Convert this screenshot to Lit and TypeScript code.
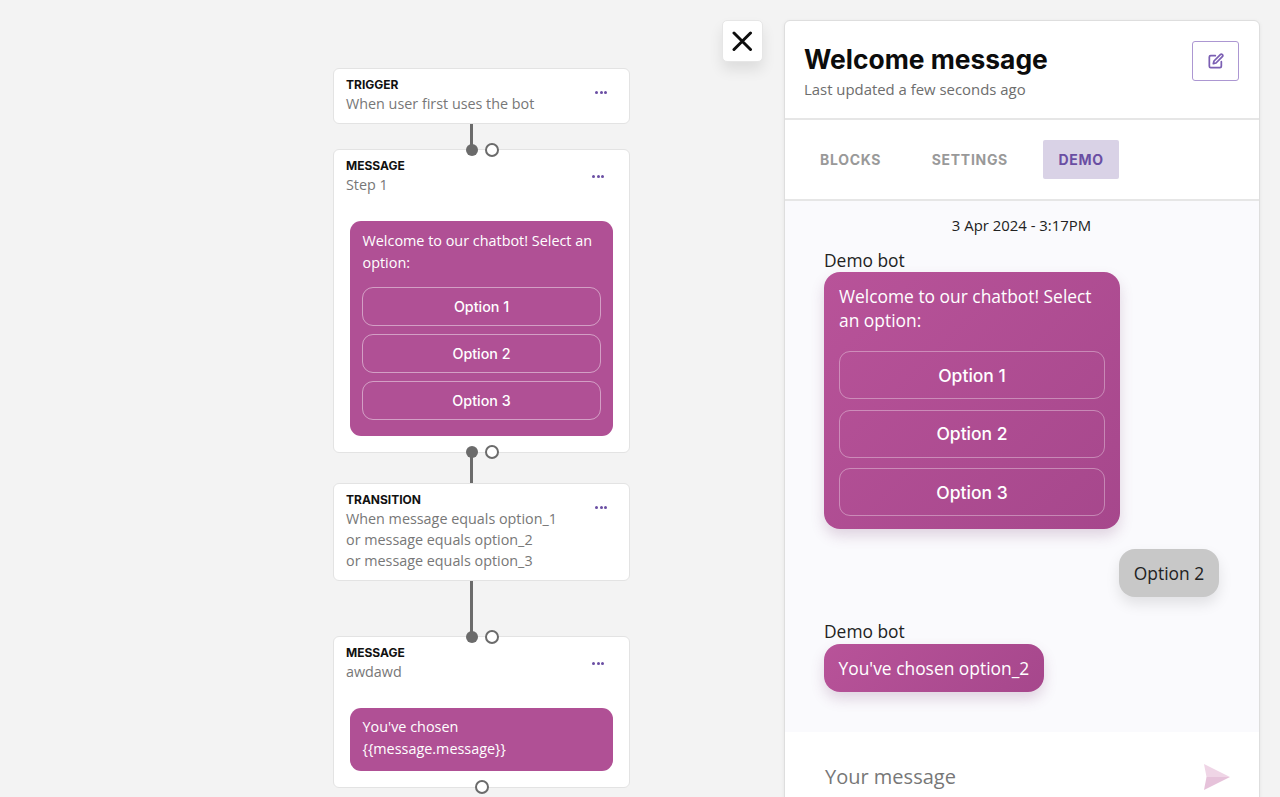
import { LitElement, html, css } from "lit";
import { customElement } from "lit/decorators.js";

@customElement("app-root")
export class AppRoot extends LitElement {
  static styles = css`
    :host { display: block; }
    * { box-sizing: border-box; }
    .page {
      display: flex; align-items: flex-start; height: 797px; overflow: hidden;
      background: #f3f3f3; padding-left: 333px;
      font-family: "Open Sans", "Noto Sans", sans-serif; color: #222;
    }
    .flow { width: 297px; flex: none; padding-top: 68px; display: flex; flex-direction: column; }
    .card {
      position: relative; background: #fff; border: 1px solid #e3e3e3; border-radius: 6px;
      padding: 8px 12px 0;
    }
    .trigger { height: 56px; }
    .step1 { height: 304px; }
    .transition { height: 98px; }
    .step2 { height: 152px; }
    .head { display: flex; justify-content: space-between; align-items: flex-start; }
    .label { font: 700 12px/16px Inter, sans-serif; color: #111; }
    .desc { font-size: 14.35px; line-height: 21px; color: #777; }
    .dots { display: flex; gap: 1.5px; padding-right: 10px; margin-top: 14px; }
    .step1 .dots, .step2 .dots { padding-right: 13px; margin-top: 17px; }
    .dots i { width: 3px; height: 3px; border-radius: 50%; background: #6a4ea3; }
    .node-bubble {
      margin: 26px 4px 0; background: #b05095; border-radius: 11px; color: #fff;
      padding: 9px 12px 16px; font-size: 14.4px; line-height: 22px;
    }
    .node-text { padding-left: 0.5px; }
    .step2 .node-bubble { height: 63px; padding-top: 8px; }
    .node-bubble .opts { margin-top: 13px; display: flex; flex-direction: column; gap: 8px; }
    .node-bubble .opt {
      height: 39px; border: 1px solid rgba(255,255,255,.45); border-radius: 11px;
      display: flex; align-items: center; justify-content: center;
      font: 500 14.3px Inter, sans-serif;
    }
    .link { width: 3px; background: #6b6b6b; margin-left: 137px; flex: none; }
    .port { position: absolute; border-radius: 50%; }
    .port.solid { width: 12px; height: 12px; background: #6b6b6b; }
    .port.hollow { width: 14px; height: 14px; background: #fff; border: 2px solid #6b6b6b; }
    .solid.top { top: -6px; left: 132px; }
    .solid.bot { bottom: -6px; left: 132px; }
    .hollow.top { top: -7px; left: 151px; }
    .hollow.bot { bottom: -7px; left: 151px; }
    .hollow.end { bottom: -7px; left: 141px; }
    .close {
      flex: none; margin: 20px 0 0 92px; width: 41px; height: 42px; background: #fff;
      border: 1px solid #e6e6e6; border-radius: 5px;
      box-shadow: 0 8px 14px rgba(0,0,0,.09);
      display: flex; align-items: center; justify-content: center;
    }
    .panel {
      flex: none; margin: 20px 0 0 21px; width: 476px; height: 790px; background: #fff;
      border: 1px solid #dedede; border-radius: 6px 6px 0 0;
      box-shadow: 0 1px 4px rgba(0,0,0,.06);
      display: flex; flex-direction: column;
    }
    .phead {
      height: 99px; flex: none; border-bottom: 2px solid #e6e6e6; padding: 20px 20px 0 19px;
      display: flex; justify-content: space-between; align-items: flex-start;
    }
    .title { font: 700 26.4px/37px Inter, sans-serif; color: #0c0c0c; margin: 0; }
    .sub { font-size: 14.9px; line-height: 20px; color: #6d6d6d; margin-top: 1px; }
    .edit {
      width: 47px; height: 40px; border: 1.5px solid #ac97d2; border-radius: 3px; background: #fff;
      display: flex; align-items: center; justify-content: center;
    }
    .tabs {
      height: 81px; flex: none; border-bottom: 2px solid #e6e6e6; padding: 20px 20px 0 20px;
      display: flex; align-items: flex-start; gap: 20.5px;
    }
    .tab {
      height: 39px; padding: 0 15px; display: flex; align-items: center; border-radius: 2px;
      font: 700 14px Inter, sans-serif; letter-spacing: 0.7px; color: #999;
    }
    .tab.on { background: #d9d2e6; color: #6a4ea3; }
    .chat {
      height: 531px; flex: none; background: #fafafd; padding: 14px 40px 0 39px; display: flex; flex-direction: column;
    }
    .date { text-align: center; font-size: 14.9px; line-height: 20px; color: #222; }
    .who { font-size: 17.4px; line-height: 24px; color: #222; margin-top: 13px; }
    .bubble {
      background: linear-gradient(135deg, #b85399, #a6478c); color: #fff; border-radius: 16px;
      font-size: 17.4px; line-height: 24px;
      box-shadow: 0 7px 14px rgba(120,60,110,.2);
      align-self: flex-start;
    }
    .welcome { width: 296px; height: 257px; padding: 12px 15px; }
    .welcome .opts { margin-top: 19px; display: flex; flex-direction: column; gap: 10.5px; }
    .welcome .opt {
      height: 48px; border: 1px solid rgba(255,255,255,.35); border-radius: 11px;
      display: flex; align-items: center; justify-content: center;
      font: 500 17.5px Inter, sans-serif;
    }
    .user {
      align-self: flex-end; margin-top: 20px; width: 100px; height: 48px; background: #c8c8c8;
      border-radius: 16px; display: flex; align-items: center; justify-content: center;
      font-size: 17.4px; color: #222; box-shadow: 0 7px 14px rgba(0,0,0,.1);
    }
    .who2 { margin-top: 22px; }
    .chosen {
      height: 48px; margin-top: 1px; padding: 0 14.5px;
      display: flex; align-items: center; white-space: nowrap;
    }
    .input {
      flex: 1; padding: 0 29px 0 40px; display: flex; align-items: flex-start; justify-content: space-between;
    }
    .ph { font-size: 20px; line-height: 28px; color: #777; margin-top: 31px; }
    .send { margin-top: 32px; }
  `;

  private dots() {
    return html`<div class="dots"><i></i><i></i><i></i></div>`;
  }

  render() {
    return html`<div class="page">
      <div class="flow">
        <div class="card trigger">
          <div class="head">
            <div><div class="label">TRIGGER</div><div class="desc">When user first uses the bot</div></div>
            ${this.dots()}
          </div>
        </div>
        <div class="link" style="height:25px"></div>
        <div class="card step1">
          <span class="port solid top"></span><span class="port hollow top"></span>
          <div class="head">
            <div><div class="label">MESSAGE</div><div class="desc">Step 1</div></div>
            ${this.dots()}
          </div>
          <div class="node-bubble">
            <div class="node-text">Welcome to our chatbot! Select an option:</div>
            <div class="opts">
              <div class="opt">Option 1</div><div class="opt">Option 2</div><div class="opt">Option 3</div>
            </div>
          </div>
          <span class="port solid bot"></span><span class="port hollow bot"></span>
        </div>
        <div class="link" style="height:30px"></div>
        <div class="card transition">
          <div class="head">
            <div>
              <div class="label">TRANSITION</div>
              <div class="desc">When message equals option_1<br />or message equals option_2<br />or message equals option_3</div>
            </div>
            ${this.dots()}
          </div>
        </div>
        <div class="link" style="height:55px"></div>
        <div class="card step2">
          <span class="port solid top"></span><span class="port hollow top"></span>
          <div class="head">
            <div><div class="label">MESSAGE</div><div class="desc">awdawd</div></div>
            ${this.dots()}
          </div>
          <div class="node-bubble"><div class="node-text">You've chosen<br />{{message.message}}</div></div>
          <span class="port hollow end"></span>
        </div>
      </div>

      <div class="close">
        <svg width="21" height="21" viewBox="0 0 21 21" fill="none" stroke="#0d0d0d" stroke-width="3" stroke-linecap="round">
          <path d="M2 2l16.5 16.5M18.5 2L2 18.5" />
        </svg>
      </div>

      <div class="panel">
        <div class="phead">
          <div>
            <h1 class="title">Welcome message</h1>
            <div class="sub">Last updated a few seconds ago</div>
          </div>
          <div class="edit">
            <svg width="16" height="16" viewBox="0 0 24 24" fill="none" stroke="#7b5fb3" stroke-width="2.6" stroke-linecap="round" stroke-linejoin="round">
              <path d="M11 4H4a2 2 0 0 0-2 2v14a2 2 0 0 0 2 2h14a2 2 0 0 0 2-2v-7" />
              <path d="M18.5 2.5a2.121 2.121 0 0 1 3 3L12 15l-4 1 1-4 9.5-9.5z" />
            </svg>
          </div>
        </div>
        <div class="tabs">
          <div class="tab">BLOCKS</div>
          <div class="tab">SETTINGS</div>
          <div class="tab on">DEMO</div>
        </div>
        <div class="chat">
          <div class="date">3 Apr 2024 - 3:17PM</div>
          <div class="who">Demo bot</div>
          <div class="bubble welcome">
            Welcome to our chatbot! Select an option:
            <div class="opts">
              <div class="opt">Option 1</div><div class="opt">Option 2</div><div class="opt">Option 3</div>
            </div>
          </div>
          <div class="user">Option 2</div>
          <div class="who who2">Demo bot</div>
          <div class="bubble chosen">You've chosen option_2</div>
        </div>
        <div class="input">
          <div class="ph">Your message</div>
          <svg class="send" width="26" height="26" viewBox="0 0 26 26">
            <path d="M0 0L26 13L2.5 13Z" fill="#efd5e6" />
            <path d="M2.5 13L26 13L0 26Z" fill="#e6c2da" />
          </svg>
        </div>
      </div>
    </div>`;
  }
}
